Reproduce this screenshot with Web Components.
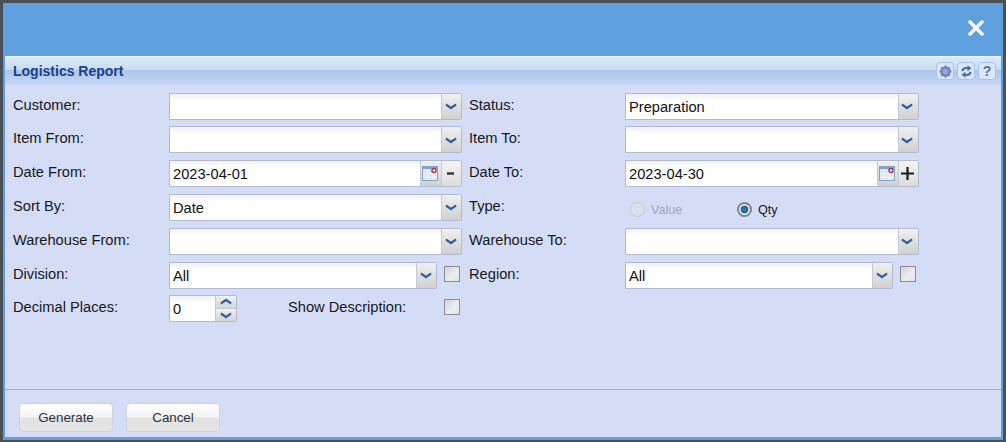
<!DOCTYPE html>
<html>
<head>
<meta charset="utf-8">
<title>Logistics Report</title>
<style>
  html, body { margin: 0; height: 100%; background: #4b5056; overflow: hidden; }
  body { font-family: "Liberation Sans", Arial, sans-serif; }
</style>
</head>
<body>
<report-window>
  <report-panel heading="Logistics Report">
    <report-form>
      <form-label>Customer:</form-label>
      <form-combo></form-combo>
      <form-label>Status:</form-label>
      <form-combo value="Preparation" wide></form-combo>

      <form-label>Item From:</form-label>
      <form-combo></form-combo>
      <form-label>Item To:</form-label>
      <form-combo wide></form-combo>

      <form-label>Date From:</form-label>
      <form-date value="2023-04-01" step="minus"></form-date>
      <form-label>Date To:</form-label>
      <form-date value="2023-04-30" step="plus" wide></form-date>

      <form-label>Sort By:</form-label>
      <form-combo value="Date"></form-combo>
      <form-label>Type:</form-label>
      <form-radios></form-radios>

      <form-label>Warehouse From:</form-label>
      <form-combo></form-combo>
      <form-label>Warehouse To:</form-label>
      <form-combo wide></form-combo>

      <form-label>Division:</form-label>
      <form-checked-combo value="All"></form-checked-combo>
      <form-label>Region:</form-label>
      <form-checked-combo value="All"></form-checked-combo>

      <form-label>Decimal Places:</form-label>
      <form-spin-row value="0" text="Show Description:"></form-spin-row>
    </report-form>
    <form-button slot="footer">Generate</form-button>
    <form-button slot="footer">Cancel</form-button>
  </report-panel>
</report-window>

<script>
(function () {
  const CHEVRON = `<svg width="12" height="8" viewBox="0 0 12 8" style="flex:none"><path d="M1.2 1.4 L6 4.4 L10.800 1.4 L11.600 3.400 L6 7.400 L.4 3.400Z" fill="#35609f"/></svg>`;

  const CHEVRON_UP = `<svg width="12" height="8" viewBox="0 0 12 8" style="flex:none"><path d="M1.2 6.600 L6 3.600 L10.800 6.600 L11.600 4.600 L6 .6 L.4 4.600Z" fill="#35609f"/></svg>`;

  const CALENDAR = `<svg width="16" height="15" viewBox="0 0 16 15" style="flex:none">
      <rect x="0.5" y="0.5" width="15" height="14" fill="#dfe7f3" stroke="#84a1c7"/>
      <rect x="1" y="1" width="14" height="2" fill="#84a1c7"/>
      <path d="M5.500 4v10M10.500 4v10M1 7.500h14M1 11h14" stroke="#f0f3f8"/>
      <circle cx="12" cy="4.500" r="2" fill="#f4e8ea" stroke="#a83a48" stroke-width="1.4"/>
    </svg>`;

  const FIELD_STYLE = `
    .field{
        display:flex;
        height:27px;
        box-sizing:border-box;
        border:1.5px solid #b3b9d2;
        border-radius:0 2px 2px 0;
        background:white;
    }
    .input{
        flex:1;
        min-width:0;
        padding:3px 0 0 3px;
        font-size:14.67px;
        line-height:20px;
        color:#111;
        background:linear-gradient(#f0f2f2,#ffffff 7px);
        overflow:hidden;
        white-space:nowrap;
    }
    .trigger{
        box-sizing:border-box;
        width:20px;
        flex:none;
        padding-right:2px;
        display:flex;
        align-items:center;
        justify-content:center;
        border-left:1px solid #c3c8da;
        background:linear-gradient(#f0f0f0,#d0d0d0);
    }`;

  class ReportWindow extends HTMLElement {
    constructor() {
      super();
      this.attachShadow({ mode: "open" });
      this.shadowRoot.innerHTML = `
        <style>
        :host{
            display:block;
            box-sizing:border-box;
            width:1006px;
            height:442px;
            padding:3px 3px 2px 3px;
        }
        .frame{
            box-sizing:border-box;
            height:100%;
            background:#5ea0dd;
            padding:0 2px 3px 2px;
            display:flex;
            flex-direction:column;
        }
        .top{
            flex:none;
            box-sizing:border-box;
            height:53px;
            display:flex;
            justify-content:flex-end;
            align-items:center;
            padding:0 17px 4px 0;
        }
        </style>
        <div class="frame">
            <div class="top">
                <svg width="16" height="16" viewBox="0 0 16 16"><path d="M2 2 L14 14 M14 2 L2 14" stroke="#f4f8fc" stroke-width="3.6" stroke-linecap="round"/></svg>
            </div>
            <slot></slot>
        </div>`;
    }
  }

  class ReportPanel extends HTMLElement {
    constructor() {
      super();
      this.attachShadow({ mode: "open" });
      this.shadowRoot.innerHTML = `
        <style>
        :host{
            display:flex;
            flex-direction:column;
            flex:1;
            min-height:0;
            background:#d5ddf6;
        }
        .header{
            flex:none;
            height:29px;
            box-sizing:border-box;
            padding:0 5px 0 8px;
            display:flex;
            justify-content:space-between;
            align-items:flex-start;
            border-top:1px solid #eef4fb;
            background:linear-gradient(#dce9f8,#c9dcf2 13px,#acc5ea 13px,#c9d6f3 28px);
        }
        .title{
            font-size:14px;
            font-weight:bold;
            line-height:29px;
            color:#15428b;
        }
        .tools{
            display:flex;
            gap:3px;
            padding-top:5px;
        }
        .body{
            flex:1;
            min-height:0;
            padding:7.6px 0 0 8px;
        }
        .footer{
            flex:none;
            height:48px;
            box-sizing:border-box;
            border-top:1px solid #98b4de;
            padding:13px 0 0 14px;
            display:flex;
            gap:13px;
        }
        .tool{
            box-sizing:border-box;
            width:18px;
            height:18px;
            border:1.5px solid #a5c3ec;
            border-radius:4px;
            background:#dde6f9;
            display:flex;
            align-items:center;
            justify-content:center;
            font-size:14px;
            font-weight:bold;
            color:#4f74a8;
        }
        </style>
        <div class="header">
            <div class="title"></div>
            <div class="tools">
                <div class="tool"><svg width="13" height="13" viewBox="0 0 14 14"><circle cx="7" cy="7" r="4.4" fill="#9aa6d8" stroke="#6f80c0" stroke-width="2.6"/><path d="M7 .4v2.6M7 11v2.6M.4 7h2.6M11 7h2.6M2.4 2.4l1.8 1.8M9.8 9.8l1.8 1.8M2.4 11.6l1.8-1.8M9.8 4.2l1.8-1.8" stroke="#6f80c0" stroke-width="1.8"/></svg></div>
                <div class="tool"><svg width="13" height="13" viewBox="0 0 14 14"><path d="M2.5 6.5 C2.8 4 5 3 8.5 3.4" fill="none" stroke="#48709f" stroke-width="2.2"/><path d="M8 0.4 L12.4 3.6 L8 6.6Z" fill="#48709f"/><path d="M11.5 7.5 C11.2 10 9 11 5.5 10.6" fill="none" stroke="#48709f" stroke-width="2.2"/><path d="M6 7.4 L1.6 10.4 L6 13.6Z" fill="#48709f"/></svg></div>
                <div class="tool">?</div>
            </div>
        </div>
        <div class="body"><slot></slot></div>
        <div class="footer"><slot name="footer"></slot></div>`;
      this.shadowRoot.querySelector(".title").textContent = this.getAttribute("heading");
    }
  }

  class ReportForm extends HTMLElement {
    constructor() {
      super();
      this.attachShadow({ mode: "open" });
      this.shadowRoot.innerHTML = `
        <style>
        :host{ display:block; }
        .grid{
            display:grid;
            grid-template-columns:156px 300px 156px 294px;
            grid-auto-rows:27px;
            row-gap:6.8px;
        }
        </style>
        <div class="grid"><slot></slot></div>`;
    }
  }

  class FormLabel extends HTMLElement {
    constructor() {
      super();
      this.attachShadow({ mode: "open" });
      this.shadowRoot.innerHTML = `
        <style>
        :host{
            display:block;
            font-size:14.67px;
            line-height:25px;
            color:#15171c;
            white-space:nowrap;
        }
        </style>
        <slot></slot>`;
    }
  }

  class FormCombo extends HTMLElement {
    constructor() {
      super();
      this.attachShadow({ mode: "open" });
      const width = this.hasAttribute("wide") ? "293.5px" : "293px";
      this.shadowRoot.innerHTML = `
        <style>
        :host{ display:block; width:var(--combo-width,${width}); }
        ${FIELD_STYLE}
        </style>
        <div class="field">
            <div class="input"></div>
            <div class="trigger">${CHEVRON}</div>
        </div>`;
      this.shadowRoot.querySelector(".input").textContent = this.getAttribute("value") || "";
    }
  }

  class FormDate extends HTMLElement {
    constructor() {
      super();
      this.attachShadow({ mode: "open" });
      const width = this.hasAttribute("wide") ? "293.5px" : "293px";
      const plus = this.getAttribute("step") === "plus";
      this.shadowRoot.innerHTML = `
        <style>
        :host{ display:block; width:${width}; }
        ${FIELD_STYLE}
        .trigger.cal{ width:21px; }
        .trigger.step{ background:linear-gradient(#f4f4f4,#dcdcdc); }
        </style>
        <div class="field">
            <div class="input"></div>
            <div class="trigger cal">${CALENDAR}</div>
            <div class="trigger step">
                ${plus
                  ? `<svg width="15" height="15" viewBox="0 0 15 15" style="flex:none"><path d="M7.5 1v13M1 7.5h13" stroke="#1c1c1c" stroke-width="2.2"/></svg>`
                  : `<svg width="9" height="3" viewBox="0 0 9 3" style="flex:none"><path d="M1 1.5h7" stroke="#333" stroke-width="2.4"/></svg>`}
            </div>
        </div>`;
      this.shadowRoot.querySelector(".input").textContent = this.getAttribute("value");
    }
  }

  class FormCheck extends HTMLElement {
    constructor() {
      super();
      this.attachShadow({ mode: "open" });
      this.shadowRoot.innerHTML = `
        <style>
        :host{
            display:block;
            box-sizing:border-box;
            width:16px;
            height:16px;
            border:1.5px solid #8d8d8d;
            background:linear-gradient(135deg,#cfd3d8,#eceef0 60%,#dfe2e6);
        }
        </style>`;
    }
  }

  class FormCheckedCombo extends HTMLElement {
    constructor() {
      super();
      this.attachShadow({ mode: "open" });
      this.shadowRoot.innerHTML = `
        <style>
        :host{
            display:flex;
            gap:7px;
            align-items:flex-start;
            --combo-width:268px;
        }
        form-check{ margin-top:4px; }
        </style>
        <form-combo value="${this.getAttribute("value")}"></form-combo>
        <form-check></form-check>`;
    }
  }

  class FormSpinRow extends HTMLElement {
    constructor() {
      super();
      this.attachShadow({ mode: "open" });
      this.shadowRoot.innerHTML = `
        <style>
        :host{
            display:flex;
            align-items:flex-start;
            grid-column:2 / 3;
        }
        ${FIELD_STYLE}
        .field{ width:68px; flex:none; }
        .buttons{
            box-sizing:border-box;
            width:21px;
            flex:none;
            display:flex;
            flex-direction:column;
            border-left:1px solid #c3c8da;
        }
        .buttons div{
            flex:1;
            display:flex;
            align-items:center;
            justify-content:center;
            background:linear-gradient(#f0f0f0,#d4d4d4);
        }
        .buttons div + div{ border-top:1px solid #c3c8da; }
        .text{
            margin-left:51px;
            width:156px;
            flex:none;
            font-size:14.67px;
            line-height:25px;
            color:#15171c;
            white-space:nowrap;
        }
        form-check{ margin-top:4px; }
        </style>
        <div class="field">
            <div class="input"></div>
            <div class="buttons">
                <div>${CHEVRON_UP}</div>
                <div>${CHEVRON}</div>
            </div>
        </div>
        <div class="text"></div>
        <form-check></form-check>`;
      this.shadowRoot.querySelector(".input").textContent = this.getAttribute("value");
      this.shadowRoot.querySelector(".text").textContent = this.getAttribute("text");
    }
  }

  class FormRadios extends HTMLElement {
    constructor() {
      super();
      this.attachShadow({ mode: "open" });
      this.shadowRoot.innerHTML = `
        <style>
        :host{
            display:flex;
            align-items:center;
            height:24px;
            padding:4px 0 0 5px;
            font-size:12.6px;
        }
        .opt{
            display:flex;
            align-items:center;
            gap:6px;
            width:107px;
        }
        .dot{
            box-sizing:border-box;
            width:15px;
            height:15px;
            border-radius:50%;
            border:1.5px solid #c4c8d4;
            background:#dadfee;
        }
        .on .dot{
            border:2px solid #808288;
            background:radial-gradient(circle,#2c8cbd 0,#14628f 3.5px,#e6e8ec 4.2px);
        }
        .off{ color:#a3a7b4; }
        .on{ color:#15171c; }
        </style>
        <div class="opt off"><div class="dot"></div>Value</div>
        <div class="opt on"><div class="dot"></div>Qty</div>`;
    }
  }

  class FormButton extends HTMLElement {
    constructor() {
      super();
      this.attachShadow({ mode: "open" });
      this.shadowRoot.innerHTML = `
        <style>
        :host{
            display:block;
            box-sizing:border-box;
            width:94px;
            height:29px;
            border:1px solid #cdd2dc;
            border-radius:4px;
            background:linear-gradient(#ffffff,#f4f4f4 13px,#e3e3e3 14px,#e4e4e4);
            font-size:13.33px;
            line-height:27px;
            text-align:center;
            color:#2b3040;
        }
        </style>
        <slot></slot>`;
    }
  }

  customElements.define("form-check", FormCheck);
  customElements.define("form-combo", FormCombo);
  customElements.define("form-date", FormDate);
  customElements.define("form-label", FormLabel);
  customElements.define("form-radios", FormRadios);
  customElements.define("form-button", FormButton);
  customElements.define("form-spin-row", FormSpinRow);
  customElements.define("form-checked-combo", FormCheckedCombo);
  customElements.define("report-form", ReportForm);
  customElements.define("report-panel", ReportPanel);
  customElements.define("report-window", ReportWindow);
})();
</script>
</body>
</html>
